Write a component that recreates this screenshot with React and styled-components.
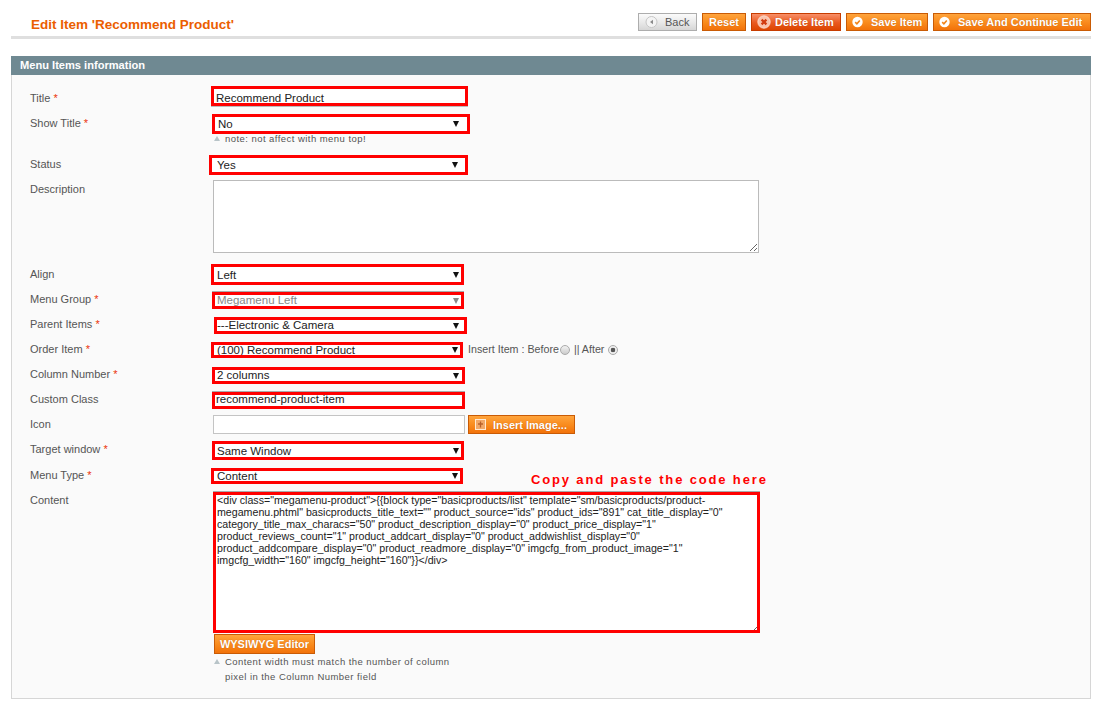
import React from 'react';
import styled, { createGlobalStyle, css } from 'styled-components';

const GlobalStyle = createGlobalStyle`
	html, body {
		margin: 0;
		padding: 0;
		background: #fff;
		font-family: "Liberation Sans", Arial, sans-serif;
		font-size: 11.5px;
		color: #444;
	}
`;

const Page = styled.div`
	width: 1080px;
	height: 707px;
	padding: 13px 10px 0 11px;
`;

const Header = styled.div`
	display: flex;
	align-items: flex-start;
	justify-content: space-between;
	height: 23px;
	border-bottom: 3px solid #dfdfdf;
`;

const PageTitle = styled.h3`
	margin: 4px 0 0 20px;
	font-size: 13.5px;
	line-height: 15px;
	font-weight: bold;
	color: #eb5e00;
`;

const Actions = styled.div`
	display: flex;
	gap: 5px;
`;

const Button = styled.button`
	display: flex;
	align-items: center;
	justify-content: ${({ $center }) => ($center ? 'center' : 'flex-start')};
	gap: ${({ $gap }) => $gap || 6}px;
	box-sizing: border-box;
	width: ${({ $w }) => $w}px;
	height: 18px;
	padding: 0 0 0 ${({ $pad }) => $pad || 0}px;
	font-family: inherit;
	font-size: 11px;
	font-weight: bold;
	color: #fff;
	text-shadow: 0 0 1px rgba(150, 60, 0, 0.6);
	border: 1px solid #c95b05;
	background: linear-gradient(#ffa43c, #f98a1c 55%, #f2720a);
	${({ $kind }) =>
		$kind === 'back' &&
		css`
			border: 1px solid #adadad;
			background: linear-gradient(#fbfbfb, #e6e6e6 60%, #d6d6d6);
			color: #555;
			font-weight: normal;
			text-shadow: none;
		`}
	${({ $kind }) =>
		$kind === 'delete' &&
		css`
			border: 1px solid #c73c00;
			background: linear-gradient(#f88f68, #e9591f 55%, #dd4500);
		`}
`;

const InsertButton = styled(Button)`
	height: 19px;
	margin-left: 3px;
`;

const EditorButton = styled(Button)`
	height: 20px;
	margin: 1px 0 0 3px;
`;

const Section = styled.div`
	margin-top: 17px;
`;

const SectionHead = styled.div`
	box-sizing: border-box;
	height: 19px;
	padding-left: 9px;
	background: #6f8992;
	color: #fff;
	font-size: 11.1px;
	font-weight: bold;
	line-height: 19px;
`;

const FieldSet = styled.div`
	box-sizing: border-box;
	height: 624px;
	padding-top: 11px;
	border: 1px solid #d6d6d6;
	border-top: 0;
	background: #fafafa;
`;

const Row = styled.div`
	display: flex;
	height: ${({ $h }) => $h}px;
`;

const Label = styled.label`
	flex: none;
	box-sizing: border-box;
	width: 199px;
	padding: ${({ $top }) => $top}px 0 0 18px;
	line-height: 14px;
	color: #555;
	font-size: 11px;
`;

const Star = styled.span`
	color: #eb340a;
`;

// red marker painted over the field, like the annotation in a screenshot
const Frame = styled.div`
	position: relative;
	box-sizing: border-box;
	flex: none;
	width: ${({ $w }) => $w}px;
	height: ${({ $h }) => $h}px;
	margin: ${({ $mt }) => $mt || 0}px 0 0 ${({ $ml }) => $ml || 0}px;
	background: #fff;
	${({ $edge }) => $edge === 'top' && 'box-shadow: 0 -1px 0 #aaa;'}
	${({ $edge }) => $edge === 'bottom' && 'box-shadow: 0 1px 0 #bbb;'}
	&::after {
		content: '';
		position: absolute;
		inset: 0;
		border: 3px solid #f00;
		pointer-events: none;
	}
`;

const controlText = css`
	display: block;
	box-sizing: border-box;
	width: 100%;
	height: 100%;
	border: 0;
	outline: 0;
	background: transparent;
	font-family: inherit;
	font-size: 11.5px;
	color: #222;
`;

const TextInput = styled.input`
	${controlText}
	padding: ${({ $down }) => $down || 0}px 0 ${({ $lift }) => $lift || 0}px ${({ $left }) => $left}px;
`;

const Select = styled.select`
	${controlText}
	appearance: none;
	padding: 0 0 ${({ $lift }) => $lift || 0}px ${({ $left }) => $left}px;
	color: ${({ disabled }) => (disabled ? '#888' : '#222')};
	opacity: 1;
`;

const Arrow = styled.span`
	position: absolute;
	z-index: 1;
	top: 50%;
	right: ${({ $right }) => $right}px;
	width: 0;
	height: 0;
	margin-top: -3px;
	border-left: 3px solid transparent;
	border-right: 3px solid transparent;
	border-top: 6px solid ${({ $off }) => ($off ? '#888' : '#111')};
	pointer-events: none;
`;

const FieldColumn = styled.div`
	display: flex;
	flex-direction: column;
`;

const Note = styled.p`
	margin: ${({ $mt }) => $mt || 0}px 0 0 3px;
	padding-left: ${({ $tri }) => ($tri ? 0 : 11)}px;
	font-size: 9.5px;
	line-height: 13px;
	letter-spacing: 0.45px;
	color: #555;
	&::before {
		content: ${({ $tri }) => ($tri ? "''" : 'none')};
		display: inline-block;
		margin-right: 5px;
		vertical-align: 1px;
		border-left: 3px solid transparent;
		border-right: 3px solid transparent;
		border-bottom: 5px solid #b8c4c8;
	}
`;

const TextArea = styled.textarea`
	flex: none;
	box-sizing: border-box;
	width: ${({ $w }) => $w}px;
	height: ${({ $h }) => $h}px;
	margin-left: 2px;
	padding: 2px;
	border: 1px solid #bbb;
	outline: 0;
	background: #fff;
	font-family: inherit;
	font-size: 11px;
`;

const CodeArea = styled.textarea`
	${controlText}
	padding: 2px 3px 3px 4px;
	line-height: 12px;
	font-size: 10.65px;
	color: #222;
`;

const PlainInput = styled.input`
	flex: none;
	box-sizing: border-box;
	width: 252px;
	height: 19px;
	margin-left: 2px;
	border: 1px solid #c4c4c4;
	background: #fff;
`;

const InlineText = styled.span`
	display: flex;
	align-items: center;
	height: 14px;
	margin-left: 5px;
	font-size: 10.7px;
	color: #555;
`;

const Radio = styled.span`
	display: inline-block;
	box-sizing: border-box;
	width: 10px;
	height: 10px;
	margin: 1px 4px 0 ${({ $ml }) => $ml || 1}px;
	border: 1px solid #aaa;
	border-radius: 50%;
	background: ${({ $on }) => ($on ? 'radial-gradient(circle, #555 0 2px, #eee 2.6px)' : 'linear-gradient(#f2f2f2, #ccc)')};
`;

const Annotation = styled.div`
	margin: 5px 0 0 68px;
	font-size: 13px;
	font-weight: bold;
	line-height: 14px;
	letter-spacing: 1.85px;
	color: #f00;
	white-space: nowrap;
`;

const CircleIcon = ({ kind }) => (
	<svg width="14" height="14" viewBox="0 0 14 14">
		{kind === 'back' && (
			<>
				<circle cx="6.5" cy="7" r="5.5" fill="#f4f4f4" stroke="#c6c6c6" />
				<path d="M8 4.8v4.4L5 7z" fill="#8a8a8a" />
			</>
		)}
		{kind === 'check' && (
			<>
				<circle cx="5.5" cy="7" r="5.2" fill="#fff" />
				<path d="M3.2 7.2l1.7 1.6 2.9-3.3" fill="none" stroke="#f28419" strokeWidth="1.6" />
			</>
		)}
		{kind === 'delete' && (
			<>
				<circle cx="7" cy="7" r="6.2" fill="#f9c3ac" stroke="#fde3d8" strokeWidth="0.8" />
				<path d="M4.6 4.6l4.8 4.8M9.4 4.6l-4.8 4.8" stroke="#d23c10" strokeWidth="2.2" />
			</>
		)}
	</svg>
);

const PlusIcon = () => (
	<svg width="11" height="11" viewBox="0 0 11 11">
		<rect x="0.5" y="0.5" width="10" height="10" fill="#f2a868" stroke="#ffe9d2" />
		<path d="M5.5 2.5v6M3 5h5" stroke="#b9612a" strokeWidth="1.3" />
	</svg>
);

// the text and arrows sit at the same page x, only the red boxes move around
const SelectField = ({ value, off, left, lift, right, ...frame }) => (
	<Frame {...frame}>
		<Select disabled={off} value={value} $lift={lift} $left={left || 6 - (frame.$ml || 0)} onChange={() => {}}>
			<option>{value}</option>
		</Select>
		<Arrow $off={off} $right={right || Math.max((frame.$ml || 0) + frame.$w - 248, 4)} />
	</Frame>
);

const code =
	'<div class="megamenu-product">{{block type="basicproducts/list" template="sm/basicproducts/product-megamenu.phtml" basicproducts_title_text="" product_source="ids" product_ids="891" cat_title_display="0" category_title_max_characs="50" product_description_display="0" product_price_display="1" product_reviews_count="1" product_addcart_display="0" product_addwishlist_display="0" product_addcompare_display="0" product_readmore_display="0" imgcfg_from_product_image="1" imgcfg_width="160" imgcfg_height="160"}}</div>';

const App = () => (
	<Page>
		<GlobalStyle />
		<Header>
			<PageTitle>Edit Item 'Recommend Product'</PageTitle>
			<Actions>
				<Button $kind="back" $w={59} $pad={6} $gap={6}>
					<CircleIcon kind="back" />
					Back
				</Button>
				<Button $w={44} $center>Reset</Button>
				<Button $kind="delete" $w={90} $pad={5} $gap={4}>
					<CircleIcon kind="delete" />
					Delete Item
				</Button>
				<Button $w={82} $pad={5} $gap={5}>
					<CircleIcon kind="check" />
					Save Item
				</Button>
				<Button $w={158} $pad={5} $gap={5}>
					<CircleIcon kind="check" />
					Save And Continue Edit
				</Button>
			</Actions>
		</Header>
		<Section>
			<SectionHead>Menu Items information</SectionHead>
			<FieldSet>
				<Row $h={28}>
					<Label $top={5}>Title <Star>*</Star></Label>
					<Frame $w={257} $h={20} $edge="bottom">
						<TextInput $left={5} $down={4} defaultValue="Recommend Product" />
					</Frame>
				</Row>
				<Row $h={41}>
					<Label $top={2}>Show Title <Star>*</Star></Label>
					<FieldColumn>
						<SelectField value="No" left={6} $w={258} $h={20} $ml={1} />
						<Note $mt={-2} $tri>note: not affect with menu top!</Note>
					</FieldColumn>
				</Row>
				<Row $h={25}>
					<Label $top={2}>Status</Label>
					<SelectField value="Yes" right={10} $w={259} $h={20} $ml={-2} />
				</Row>
				<Row $h={85}>
					<Label $top={2}>Description</Label>
					<TextArea $w={546} $h={73} />
				</Row>
				<Row $h={27}>
					<Label $top={2}>Align</Label>
					<SelectField value="Left" $w={253} $h={21} $mt={-1} />
				</Row>
				<Row $h={25}>
					<Label $top={0}>Menu Group <Star>*</Star></Label>
					<SelectField value="Megamenu Left" off lift={2} $w={252} $h={17} $ml={1} $edge="top" />
				</Row>
				<Row $h={25}>
					<Label $top={0}>Parent Items <Star>*</Star></Label>
					<SelectField value="---Electronic & Camera" lift={2} $w={253} $h={17} $ml={3} />
				</Row>
				<Row $h={25}>
					<Label $top={0}>Order Item <Star>*</Star></Label>
					<SelectField value="(100) Recommend Product" right={5} $w={252} $h={16} />
					<InlineText>
						Insert Item : Before<Radio /> || After <Radio $on $ml={4} />
					</InlineText>
				</Row>
				<Row $h={25}>
					<Label $top={0}>Column Number <Star>*</Star></Label>
					<SelectField value="2 columns" lift={2} $w={253} $h={17} $ml={1} />
				</Row>
				<Row $h={23}>
					<Label $top={0}>Custom Class</Label>
					<Frame $w={253} $h={17} $ml={1} $edge="top">
						<TextInput $left={4} $lift={3} defaultValue="recommend-product-item" />
					</Frame>
				</Row>
				<Row $h={26}>
					<Label $top={2}>Icon</Label>
					<PlainInput />
					<InsertButton $w={107} $pad={6} $gap={7}>
						<PlusIcon />
						Insert Image...
					</InsertButton>
				</Row>
				<Row $h={27}>
					<Label $top={1}>Target window <Star>*</Star></Label>
					<SelectField value="Same Window" $w={252} $h={19} $ml={1} />
				</Row>
				<Row $h={24}>
					<Label $top={0}>Menu Type <Star>*</Star></Label>
					<SelectField value="Content" right={5} $w={252} $h={16} />
					<Annotation>Copy and paste the code here</Annotation>
				</Row>
				<Row $h={195}>
					<Label $top={1}>Content</Label>
					<FieldColumn>
						<Frame $w={547} $h={141} $ml={2} $edge="top">
							<CodeArea defaultValue={code} />
						</Frame>
						<EditorButton $w={101} $center>WYSIWYG Editor</EditorButton>
						<Note $mt={1} $tri>Content width must match the number of column</Note>
						<Note $mt={2}>pixel in the Column Number field</Note>
					</FieldColumn>
				</Row>
			</FieldSet>
		</Section>
	</Page>
);

export default App;
